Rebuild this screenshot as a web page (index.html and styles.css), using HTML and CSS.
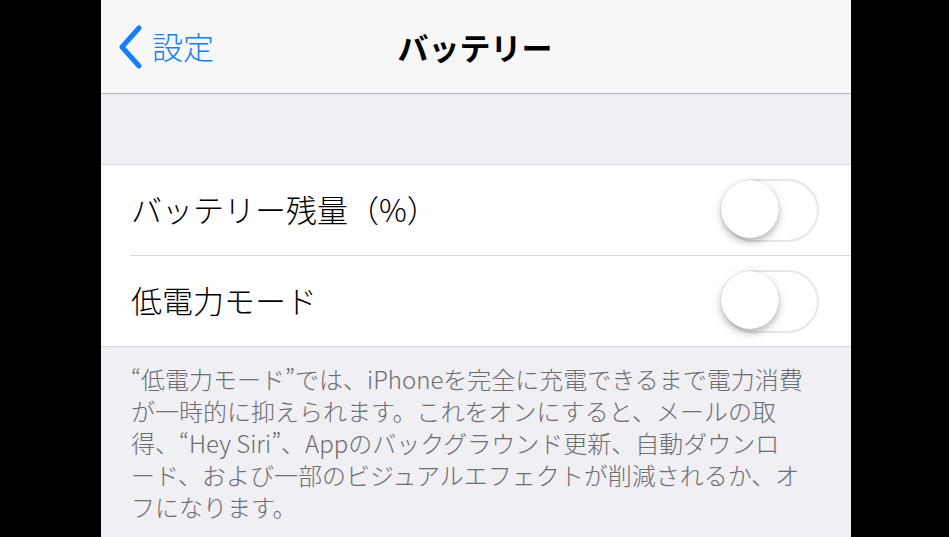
FILE: index.html
```html
<!DOCTYPE html>
<html lang="ja">
<head>
  <meta charset="UTF-8">
  <title>バッテリー</title>
  <meta name="viewport" content="width=device-width, initial-scale=1.0">
  <link rel="stylesheet" href="styles.css">
</head>
<body>

  <div class="screen">

    <!-- Navigation bar -->
    <header class="nav">
      <a class="nav-back" href="#">
        <svg class="chevron" width="26" height="44" viewBox="0 0 26 44">
          <path d="M22 3 L5 22 L22 41" fill="none" stroke="#157efb" stroke-width="5" stroke-linecap="round" stroke-linejoin="round"/>
        </svg>
        <span>設定</span>
      </a>
      <h1 class="nav-title">バッテリー</h1>
      <div></div>
    </header>

    <div class="spacer"></div>

    <!-- Settings group -->
    <section class="group">
      <div class="row">
        <span class="row-label">バッテリー残量（%）</span>
        <span class="switch"><span class="knob"></span></span>
      </div>
      <div class="row">
        <span class="row-label">低電力モード</span>
        <span class="switch"><span class="knob"></span></span>
      </div>
    </section>

    <p class="footer">“低電力モード”では、iPhoneを完全に充電できるまで電力消費<br>が一時的に抑えられます。これをオンにすると、メールの取<br>得、“Hey Siri”、Appのバックグラウンド更新、自動ダウンロ<br>ード、および一部のビジュアルエフェクトが削減されるか、オ<br>フになります。</p>

  </div>

</body>
</html>
```

FILE: styles.css
```css
body {
  margin: 0;
  background: #000;
  font-family: "Noto Sans CJK JP", "Noto Sans", sans-serif;
  height: 537px;
  overflow: hidden;
}

.screen {
  width: 750px;
  margin-left: 101px;
  background: #efeff4;
  min-height: 537px;
}

.nav {
  height: 93px;
  background: #f7f7f8;
  border-bottom: 1px solid #b4b4b6;
  display: grid;
  grid-template-columns: 1fr auto 1fr;
  align-items: center;
}

.nav-back {
  display: flex;
  align-items: center;
  gap: 9px;
  padding-left: 16px;
  color: #157efb;
  text-decoration: none;
  font-size: 31px;
  font-weight: 300;
}

.nav-back span {
  margin-top: -2px;
}

.chevron {
  display: block;
}

.nav-title {
  margin: 0;
  font-size: 31px;
  font-weight: 700;
  color: #000;
  margin-left: -2px;
}

.spacer {
  height: 70px;
}

.group {
  background: #fff;
  border-top: 1px solid #d8d8dc;
  border-bottom: 1px solid #d8d8dc;
}

.row {
  height: 90px;
  display: flex;
  align-items: center;
  justify-content: space-between;
  padding: 0 32px 0 30px;
}

.row + .row {
  border-top: 1px solid #d8d8dc;
  margin-left: 29px;
  padding-left: 1px;
}

.row-label {
  font-size: 31px;
  font-weight: 300;
  color: #000;
  margin-top: -4px;
}

.switch {
  width: 93px;
  height: 59px;
  border: 2px solid #e6e6e6;
  border-radius: 32px;
  background: #fff;
  position: relative;
}

.knob {
  position: absolute;
  left: -3px;
  top: -1px;
  width: 58px;
  height: 58px;
  border-radius: 50%;
  background: #fff;
  box-shadow: 0 4px 6px rgba(0, 0, 0, 0.22), 0 0 1px rgba(0, 0, 0, 0.25), 0 3px 14px rgba(0, 0, 0, 0.08);
}

.footer {
  margin: 0;
  padding: 16px 30px 0 30px;
  font-size: 24px;
  font-weight: 300;
  line-height: 32px;
  color: #6d6d72;
}
```
